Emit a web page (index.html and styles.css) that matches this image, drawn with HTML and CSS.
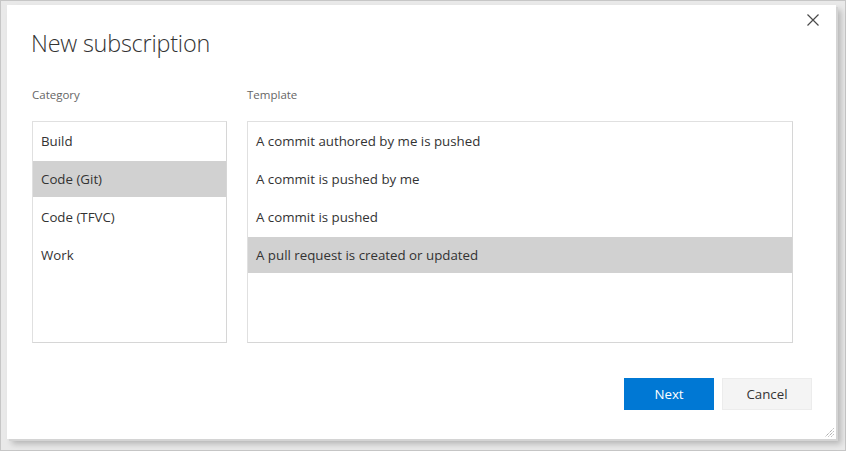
FILE: index.html
```html
<!DOCTYPE html>
<html>
<head>
<meta charset="utf-8">
<link rel="stylesheet" href="styles.css">
</head>
<body>
<div class="frame">
  <div class="dialog">
    <button class="close" aria-label="Close">
      <svg width="12" height="12" viewBox="0 0 12 12"><path d="M0.5 0.5 L11.5 11.5 M11.5 0.5 L0.5 11.5" stroke="#4a4a4a" stroke-width="1.2" fill="none"/></svg>
    </button>
    <h1 class="title">New subscription</h1>
    <div class="columns">
      <div class="col col-category">
        <div class="label">Category</div>
        <ul class="list">
          <li class="item">Build</li>
          <li class="item selected">Code (Git)</li>
          <li class="item">Code (TFVC)</li>
          <li class="item">Work</li>
        </ul>
      </div>
      <div class="col col-template">
        <div class="label">Template</div>
        <ul class="list">
          <li class="item">A commit authored by me is pushed</li>
          <li class="item">A commit is pushed by me</li>
          <li class="item">A commit is pushed</li>
          <li class="item selected">A pull request is created or updated</li>
        </ul>
      </div>
    </div>
    <div class="footer">
      <button class="btn btn-primary">Next</button>
      <button class="btn btn-default">Cancel</button>
    </div>
    <svg class="grip" width="9" height="9" viewBox="0 0 9 9"><path d="M8.5 0.5 L0.5 8.5 M8.5 3.5 L3.5 8.5 M8.5 6.5 L6.5 8.5" stroke="#888" stroke-width="1" stroke-dasharray="1 1" fill="none"/></svg>
  </div>
</div>
</body>
</html>
```
FILE: styles.css
```css
* { box-sizing: border-box; }
html, body { margin: 0; padding: 0; }
body {
  width: 846px;
  height: 451px;
  background: #e9e9e9;
  font-family: "Open Sans", "Segoe UI", sans-serif;
  overflow: hidden;
}
.frame {
  width: 846px;
  height: 451px;
  border: 1px solid #c6c6c6;
  padding: 4px 0 0 6px;
}
.dialog {
  position: relative;
  width: 829px;
  height: 434px;
  background: #fff;
  box-shadow: 2px 2px 0 #d4d4d4, 5px 5px 6px rgba(0,0,0,0.22);
  padding: 23px 0 0 24px;
}
.close {
  position: absolute;
  top: 8px;
  right: 16px;
  width: 14px;
  height: 14px;
  padding: 1px;
  border: 0;
  background: transparent;
  display: flex;
}
.title {
  margin: 0;
  font-weight: 300;
  font-size: 23.4px;
  line-height: 30px;
  color: #333;
  letter-spacing: -0.2px;
}
.columns {
  display: flex;
  gap: 20px;
  margin-top: 29px;
  padding-left: 1px;
}
.col-category { width: 195px; }
.col-template { width: 546px; }
.label {
  font-size: 11.5px;
  line-height: 16px;
  color: #666;
  margin-bottom: 18px;
}
.list {
  list-style: none;
  margin: 0;
  padding: 1px 0 0;
  height: 222px;
  border: 1px solid #e0e0e0;
  border-right-color: #d6d6d6;
  border-bottom-color: #d6d6d6;
  display: flex;
  flex-direction: column;
  gap: 2px;
}
.item {
  height: 36px;
  line-height: 36px;
  padding-left: 8px;
  font-size: 13.3px;
  color: #333;
}
.item.selected { background: #d1d1d1; }
.footer {
  display: flex;
  justify-content: flex-end;
  gap: 8px;
  margin-top: 35px;
  padding-right: 24px;
}
.btn {
  width: 90px;
  height: 32px;
  font-family: "Open Sans", "Segoe UI", sans-serif;
  font-size: 13.3px;
  border: 1px solid transparent;
  padding: 0;
}
.btn-primary { background: #0078d4; color: #fff; border-color: #0078d4; }
.btn-default { background: #f4f4f4; color: #333; border-color: #ececec; }
.grip {
  position: absolute;
  right: 2px;
  bottom: 2px;
}
```
